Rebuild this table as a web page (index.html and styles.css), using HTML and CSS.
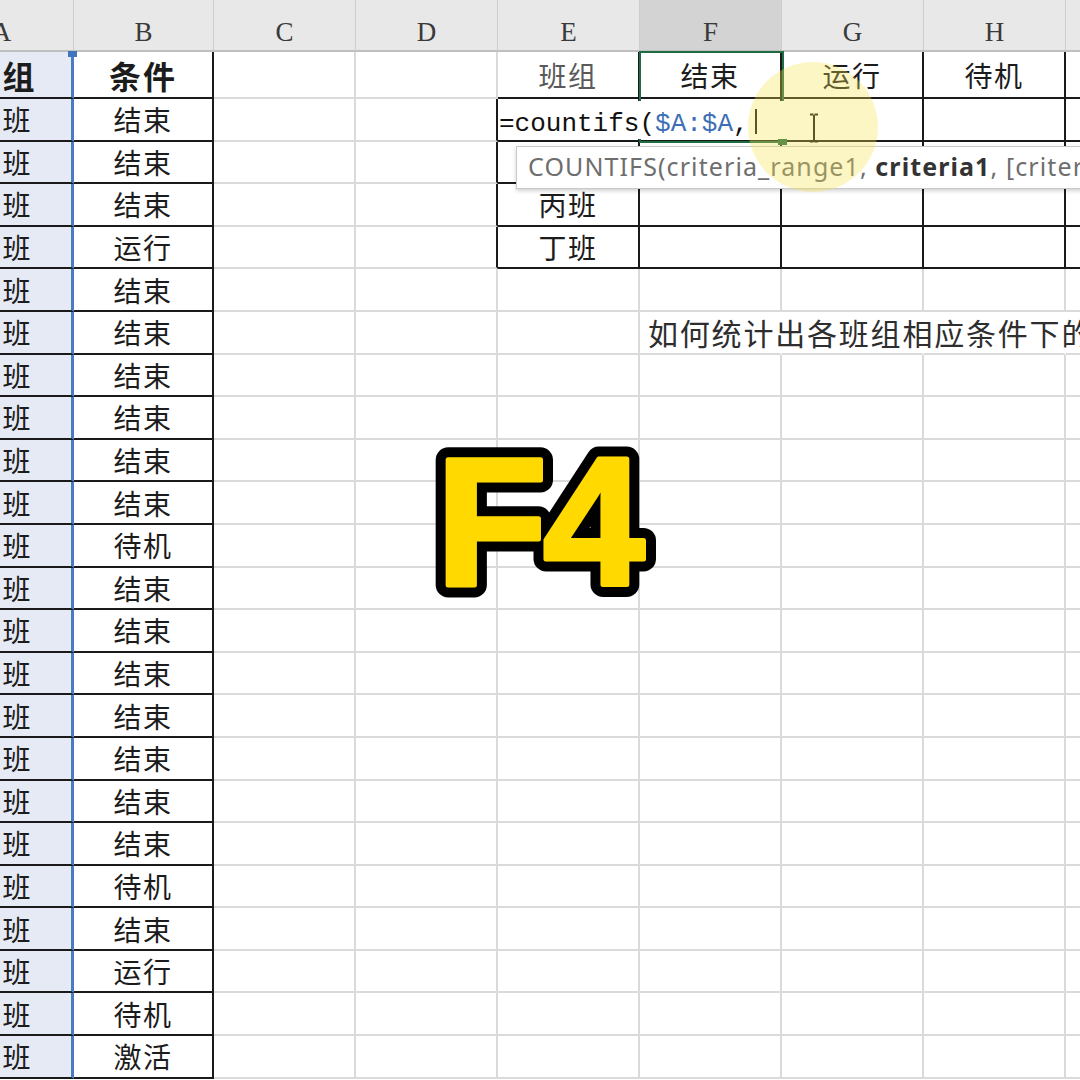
FILE: index.html
```html
<!DOCTYPE html>
<html lang="zh-CN">
<head>
<meta charset="utf-8">
<title>countifs</title>
<link rel="stylesheet" href="styles.css">
</head>
<body>
<div class="stage">
  <div class="sheet">
    <div class="h">A</div><div class="h">B</div><div class="h">C</div><div class="h">D</div><div class="h">E</div><div class="h hf">F</div><div class="h">G</div><div class="h">H</div><div class="h">I</div>

    <div class="c a bold">班组</div><div class="c b bold">条件</div><div class="c"></div><div class="c"></div><div class="c kb kr gray">班组</div><div class="c k">结束</div><div class="c k">运行</div><div class="c k">待机</div><div class="c k">激活</div>

    <div class="c a">甲班</div><div class="c b">结束</div><div class="c"></div><div class="c kr"></div><div class="c k"></div><div class="c k"></div><div class="c k"></div><div class="c k"></div><div class="c k"></div>
    <div class="c a">乙班</div><div class="c b">结束</div><div class="c"></div><div class="c kr"></div><div class="c k"></div><div class="c k"></div><div class="c k"></div><div class="c k"></div><div class="c k"></div>
    <div class="c a">丙班</div><div class="c b">结束</div><div class="c"></div><div class="c kr"></div><div class="c k">丙班</div><div class="c k"></div><div class="c k"></div><div class="c k"></div><div class="c k"></div>
    <div class="c a">丁班</div><div class="c b">运行</div><div class="c"></div><div class="c kr"></div><div class="c k">丁班</div><div class="c k"></div><div class="c k"></div><div class="c k"></div><div class="c k"></div>

    <div class="c a">甲班</div><div class="c b">结束</div><div class="c"></div><div class="c"></div><div class="c"></div><div class="c"></div><div class="c"></div><div class="c"></div><div class="c"></div>
    <div class="c a">乙班</div><div class="c b">结束</div><div class="c"></div><div class="c"></div><div class="c"></div><div class="c nr note">如何统计出各班组相应条件下的数量？</div><div class="c nr"></div><div class="c nr"></div><div class="c nr"></div>
    <div class="c a">丙班</div><div class="c b">结束</div><div class="c"></div><div class="c"></div><div class="c"></div><div class="c"></div><div class="c"></div><div class="c"></div><div class="c"></div>
    <div class="c a">丁班</div><div class="c b">结束</div><div class="c"></div><div class="c"></div><div class="c"></div><div class="c"></div><div class="c"></div><div class="c"></div><div class="c"></div>
    <div class="c a">甲班</div><div class="c b">结束</div><div class="c"></div><div class="c"></div><div class="c"></div><div class="c"></div><div class="c"></div><div class="c"></div><div class="c"></div>
    <div class="c a">乙班</div><div class="c b">结束</div><div class="c"></div><div class="c"></div><div class="c"></div><div class="c"></div><div class="c"></div><div class="c"></div><div class="c"></div>
    <div class="c a">丙班</div><div class="c b">待机</div><div class="c"></div><div class="c"></div><div class="c"></div><div class="c"></div><div class="c"></div><div class="c"></div><div class="c"></div>
    <div class="c a">丁班</div><div class="c b">结束</div><div class="c"></div><div class="c"></div><div class="c"></div><div class="c"></div><div class="c"></div><div class="c"></div><div class="c"></div>
    <div class="c a">甲班</div><div class="c b">结束</div><div class="c"></div><div class="c"></div><div class="c"></div><div class="c"></div><div class="c"></div><div class="c"></div><div class="c"></div>
    <div class="c a">乙班</div><div class="c b">结束</div><div class="c"></div><div class="c"></div><div class="c"></div><div class="c"></div><div class="c"></div><div class="c"></div><div class="c"></div>
    <div class="c a">丙班</div><div class="c b">结束</div><div class="c"></div><div class="c"></div><div class="c"></div><div class="c"></div><div class="c"></div><div class="c"></div><div class="c"></div>
    <div class="c a">丁班</div><div class="c b">结束</div><div class="c"></div><div class="c"></div><div class="c"></div><div class="c"></div><div class="c"></div><div class="c"></div><div class="c"></div>
    <div class="c a">甲班</div><div class="c b">结束</div><div class="c"></div><div class="c"></div><div class="c"></div><div class="c"></div><div class="c"></div><div class="c"></div><div class="c"></div>
    <div class="c a">乙班</div><div class="c b">结束</div><div class="c"></div><div class="c"></div><div class="c"></div><div class="c"></div><div class="c"></div><div class="c"></div><div class="c"></div>
    <div class="c a">丙班</div><div class="c b">待机</div><div class="c"></div><div class="c"></div><div class="c"></div><div class="c"></div><div class="c"></div><div class="c"></div><div class="c"></div>
    <div class="c a">丁班</div><div class="c b">结束</div><div class="c"></div><div class="c"></div><div class="c"></div><div class="c"></div><div class="c"></div><div class="c"></div><div class="c"></div>
    <div class="c a">甲班</div><div class="c b">运行</div><div class="c"></div><div class="c"></div><div class="c"></div><div class="c"></div><div class="c"></div><div class="c"></div><div class="c"></div>
    <div class="c a">乙班</div><div class="c b">待机</div><div class="c"></div><div class="c"></div><div class="c"></div><div class="c"></div><div class="c"></div><div class="c"></div><div class="c"></div>
    <div class="c a">丙班</div><div class="c b">激活</div><div class="c"></div><div class="c"></div><div class="c"></div><div class="c"></div><div class="c"></div><div class="c"></div><div class="c"></div>
  </div>

  <div class="sel-handle"></div>
  <div class="green-box"></div>
  <div class="edit-box"><span class="fx">=countifs(</span><span class="ref">$A:$A</span><span class="fx">,</span><span class="caret"></span></div>
  <div class="fill-handle"></div>
  <div class="tip">COUNTIFS(criteria_range1, <b>criteria1</b>, [criteria_range2, criteria2], ...)</div>

  <svg class="ibeam" width="14" height="30" viewBox="0 0 14 30">
    <path d="M3 1.5h3.5M7.5 1.5h3.5M7 2v26M3 28.5h3.5M7.5 28.5h3.5" stroke="#111" stroke-width="2" fill="none"/>
  </svg>

  <div class="spot"></div>

  <svg class="f4" width="260" height="200" viewBox="0 0 260 200">
    <use href="#f4text" fill="#000" stroke="#000" stroke-width="25" stroke-linejoin="round"/>
    <g fill="#FFD900" stroke="#FFD900" stroke-width="5" stroke-linejoin="round">
      <text id="f4text" x="16" y="165" font-family="Liberation Sans, Arial, sans-serif" font-weight="700" font-size="182" letter-spacing="-4">F4</text>
    </g>
  </svg>
</div>
</body>
</html>
```

FILE: styles.css
```css
html, body {
  margin: 0;
  padding: 0;
  background: #fff;
}

.stage {
  position: relative;
  width: 1080px;
  height: 1080px;
  overflow: hidden;
  background: #fff;
}

.sheet {
  display: grid;
  grid-template-columns: 144px 140px repeat(7, 142px);
  grid-template-rows: 52px 47px repeat(23, 42.6px);
  margin-left: -70px;
  width: 1278px;
  font-family: "Noto Sans CJK SC", "Noto Sans", sans-serif;
  color: #1c1c1c;
}

.h {
  box-sizing: border-box;
  background: #e8e8e8;
  border-right: 1px solid #cdcdcd;
  border-bottom: 2px solid #bfbfbf;
  display: flex;
  align-items: flex-end;
  justify-content: center;
  padding-bottom: 4px;
  font-family: "Liberation Serif", "DejaVu Serif", serif;
  font-size: 27px;
  line-height: 1;
  color: #3a3a3a;
}

.hf {
  background: #d3d3d3;
}

.c {
  box-sizing: border-box;
  border-right: 2px solid #dadada;
  border-bottom: 2px solid #dadada;
  display: flex;
  align-items: center;
  justify-content: center;
  font-size: 28px;
  letter-spacing: 1.5px;
  line-height: 1;
  white-space: nowrap;
}

.a {
  background: #e5eaf4;
  border-right: 3px solid #4a7cc0;
  border-bottom: 2px solid #1a1a1a;
  padding-left: 4px;
}

.b {
  border-right: 2px solid #1a1a1a;
  border-bottom: 2px solid #1a1a1a;
}

.k {
  border-right: 2px solid #1a1a1a;
  border-bottom: 2px solid #1a1a1a;
}

.kr {
  border-right: 2px solid #1a1a1a;
}

.kb {
  border-bottom: 2px solid #1a1a1a;
}

.bold {
  font-weight: 700;
  font-size: 32px;
  letter-spacing: 2px;
}

.gray {
  color: #5a5a5a;
}

.nr {
  border-right-color: transparent;
}

.note {
  justify-content: flex-start;
  padding-left: 8px;
  font-size: 30px;
  letter-spacing: 1.8px;
  color: #2e2e2e;
  overflow: visible;
}

.sel-handle {
  position: absolute;
  left: 68px;
  top: 51px;
  width: 9px;
  height: 6px;
  background: #3f74bf;
}

.green-box {
  position: absolute;
  left: 639px;
  top: 51px;
  width: 145px;
  height: 92px;
  box-sizing: border-box;
  border: 2px solid #1f6b42;
}

.edit-box {
  position: absolute;
  left: 499px;
  top: 101px;
  width: 423px;
  height: 38px;
  box-sizing: border-box;
  padding-top: 7px;
  background: #fff;
  display: flex;
  align-items: center;
  font-family: "Liberation Mono", "DejaVu Sans Mono", monospace;
  font-size: 26px;
  color: #111;
  white-space: nowrap;
}

.ref {
  color: #3d6fb6;
}

.caret {
  display: inline-block;
  width: 2px;
  height: 25px;
  margin-left: 6px;
  margin-top: -4px;
  background: #111;
}

.fill-handle {
  position: absolute;
  left: 778px;
  top: 139px;
  width: 9px;
  height: 6px;
  background: #1f6b42;
}

.tip {
  position: absolute;
  left: 516px;
  top: 146px;
  width: 640px;
  height: 43px;
  box-sizing: border-box;
  padding-left: 11px;
  background: #fff;
  border: 1px solid #c9c9c9;
  box-shadow: 0 2px 4px rgba(0, 0, 0, 0.18);
  font-family: "Noto Sans", "Open Sans", sans-serif;
  font-size: 25px;
  letter-spacing: 1.1px;
  line-height: 39px;
  color: #6e6e6e;
  white-space: nowrap;
}

.tip b {
  color: #333;
  font-weight: 700;
}

.ibeam {
  position: absolute;
  left: 807px;
  top: 113px;
}

.spot {
  position: absolute;
  left: 748px;
  top: 62px;
  width: 130px;
  height: 130px;
  border-radius: 50%;
  background: rgba(247, 228, 80, 0.33);
}

.f4 {
  position: absolute;
  left: 420px;
  top: 420px;
  overflow: visible;
}
```
